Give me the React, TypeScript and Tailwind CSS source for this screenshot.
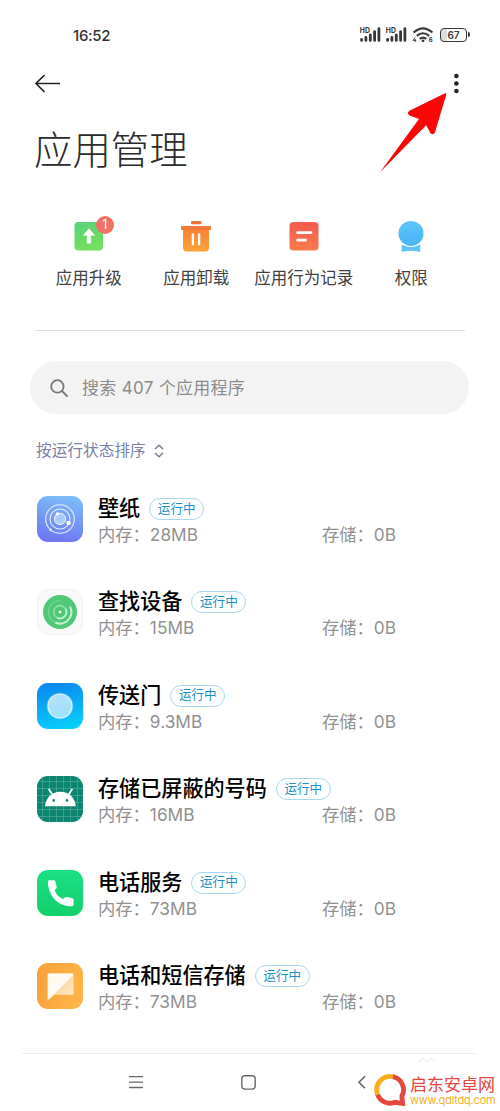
import * as React from "react"

interface AppItem {
  name: string
  memory: string
  storage: string
  icon: React.ReactNode
}

interface ActionItem {
  label: string
  icon: React.ReactNode
  badge?: number
}

const WallpaperIcon = () => (
  <svg viewBox="0 0 46 46" className="size-full">
    <defs>
      <linearGradient id="wallpaper" x1="0.6" y1="0" x2="0.4" y2="1">
        <stop offset="0" stopColor="#7cbcf8" />
        <stop offset="1" stopColor="#6d76f2" />
      </linearGradient>
    </defs>
    <rect width="46" height="46" rx="11" fill="url(#wallpaper)" />
    <g fill="none" stroke="#e3ecff" strokeWidth="1.1">
      <circle cx="23" cy="23" r="14.3" />
      <circle cx="23" cy="23" r="10" />
      <circle cx="23" cy="23" r="5.6" fill="#a9cdfb" />
    </g>
    <circle cx="31.5" cy="27" r="2.3" fill="#fff" />
    <circle cx="20.5" cy="18" r="1.8" fill="#fff" />
    <circle cx="13.5" cy="33.8" r="1.6" fill="#d3dcff" />
  </svg>
)

const FindDeviceIcon = () => (
  <svg viewBox="0 0 46 46" className="size-full">
    <rect x="0.5" y="0.5" width="45" height="45" rx="11" fill="#f9f9f9" stroke="#f1f1f1" />
    <circle cx="23" cy="23" r="17" fill="#50c878" />
    <g fill="none" stroke="#c4f2d3" strokeWidth="1.6" strokeLinecap="round">
      <circle cx="23" cy="23" r="6.4" stroke="#8fe0a8" />
      <path d="M23 11.5A11.5 11.5 0 1 0 23 34.5" stroke="#7ad898" strokeWidth="1.2" />
      <path d="M33.3 18.4A11.4 11.4 0 0 1 19 33.8" strokeWidth="2" />
      <path d="M28.7 20.1A6.4 6.4 0 0 1 20.6 29" />
    </g>
    <circle cx="23" cy="23" r="1.4" fill="#fff" />
  </svg>
)

const PortalIcon = () => (
  <svg viewBox="0 0 46 46" className="size-full">
    <defs>
      <linearGradient id="portal" x1="0.3" y1="0" x2="0.5" y2="1">
        <stop offset="0" stopColor="#0c87f0" />
        <stop offset="1" stopColor="#08cdfb" />
      </linearGradient>
      <linearGradient id="portal-orb" x1="0.3" y1="0" x2="0.7" y2="1">
        <stop offset="0" stopColor="#b5e0fb" />
        <stop offset="1" stopColor="#9be2fc" />
      </linearGradient>
    </defs>
    <rect width="46" height="46" rx="11" fill="url(#portal)" />
    <circle cx="23" cy="23" r="13.6" fill="#5cc5fb" opacity="0.45" />
    <circle cx="23" cy="23" r="11.9" fill="url(#portal-orb)" stroke="#d6f2ff" strokeWidth="1.4" />
  </svg>
)

const AndroidIcon = () => (
  <svg viewBox="0 0 46 46" className="size-full">
    <rect width="46" height="46" rx="11" fill="#0b8570" />
    <path
      d="M5.5 1V45M12.5 0V46M19.5 0V46M26.5 0V46M33.5 0V46M40.5 1V45M1 5.5H45M0 12.5H46M0 19.5H46M0 26.5H46M0 33.5H46M1 40.5H45"
      stroke="#58ac9e"
      strokeWidth="0.6"
    />
    <path d="M12 13.5L15.8 19M35 13.5L31.2 19" stroke="#fff" strokeWidth="1.7" strokeLinecap="round" />
    <path d="M8 30.3C8.6 21.8 15 15.7 23.4 15.7S38.2 21.8 38.8 30.3Z" fill="#fff" />
    <circle cx="16.7" cy="24.4" r="1.3" fill="#0b8570" />
    <circle cx="30" cy="24.4" r="1.3" fill="#0b8570" />
  </svg>
)

const PhoneIcon = () => (
  <svg viewBox="0 0 46 46" className="size-full">
    <defs>
      <linearGradient id="phone" x1="0" y1="0" x2="0" y2="1">
        <stop offset="0" stopColor="#1ce087" />
        <stop offset="1" stopColor="#12cf69" />
      </linearGradient>
    </defs>
    <rect width="46" height="46" rx="11" fill="url(#phone)" />
    <path
      d="M12.3 10.2H16.9Q18 10.2 18.3 11.3L19.7 16.7Q20 17.8 19.1 18.7L17.6 20.2C19 24 22 27.2 26 29L27.9 27.4Q28.8 26.7 29.9 27L35.6 28.3Q36.6 28.6 36.6 29.7V34.8Q36.6 36.2 35.2 36.3C22 37 11.2 26.4 10.9 12Q10.9 10.2 12.3 10.2Z"
      fill="#fff"
    />
  </svg>
)

const MessageIcon = () => (
  <svg viewBox="0 0 46 46" className="size-full">
    <defs>
      <linearGradient id="message" x1="0" y1="0" x2="1" y2="0.3">
        <stop offset="0" stopColor="#f9a039" />
        <stop offset="1" stopColor="#fcb348" />
      </linearGradient>
      <linearGradient id="message-fold" x1="0.2" y1="0.2" x2="0.9" y2="0.9">
        <stop offset="0.3" stopColor="#fcd59b" />
        <stop offset="1" stopColor="#feeacb" />
      </linearGradient>
    </defs>
    <rect width="46" height="46" rx="11" fill="url(#message)" />
    <path d="M12.3 10.4H35Q36.7 10.4 36.7 12.1V30.2Q36.7 31.8 35 31.8H17.2L12 36.3Q10.7 37.2 10.7 35.7V12.1Q10.7 10.4 12.3 10.4Z" fill="url(#message-fold)" />
    <path d="M12.3 10.4H35Q36.6 10.4 36.4 12L12 36.3Q10.7 37.2 10.7 35.7V12.1Q10.7 10.4 12.3 10.4Z" fill="#fffaf2" />
  </svg>
)

const UpgradeIcon = () => (
  <svg viewBox="0 0 32 32" className="size-8">
    <defs>
      <linearGradient id="upgrade" x1="0" y1="0" x2="0.3" y2="1">
        <stop offset="0" stopColor="#55d17c" />
        <stop offset="1" stopColor="#74df5e" />
      </linearGradient>
    </defs>
    <rect x="1.5" y="2" width="28.5" height="28.5" rx="4" fill="url(#upgrade)" />
    <path d="M16 8.8L21.6 15.2H17.8V23.2H14.2V15.2H10.4Z" fill="#fff" stroke="#fff" strokeWidth="0.6" strokeLinejoin="round" />
  </svg>
)

const UninstallIcon = () => (
  <svg viewBox="0 0 32 32" className="size-8">
    <defs>
      <linearGradient id="uninstall" x1="0" y1="0" x2="0" y2="1">
        <stop offset="0" stopColor="#f97f38" />
        <stop offset="1" stopColor="#fba337" />
      </linearGradient>
    </defs>
    <rect x="11" y="1" width="10.5" height="3.2" rx="1.2" fill="#ee7238" />
    <path d="M3 8H29V27.8Q29 31.5 25.3 31.5H6.7Q3 31.5 3 27.8Z" fill="url(#uninstall)" />
    <rect x="1" y="6" width="30" height="4" rx="1" fill="#f37a3b" />
    <path d="M12.9 13.5V25.3M19.1 13.5V25.3" stroke="#fff" strokeWidth="2.4" />
  </svg>
)

const RecordIcon = () => (
  <svg viewBox="0 0 32 32" className="size-8">
    <defs>
      <linearGradient id="record" x1="0" y1="0" x2="0" y2="1">
        <stop offset="0" stopColor="#f55a4e" />
        <stop offset="1" stopColor="#fb7a4c" />
      </linearGradient>
    </defs>
    <rect x="1.5" y="2" width="29" height="28.5" rx="4" fill="url(#record)" />
    <path d="M9.5 12.6H23M9.5 20.2H17.5" stroke="#fff" strokeWidth="2.8" strokeLinecap="round" />
  </svg>
)

const PermissionIcon = () => (
  <svg viewBox="0 0 32 32" className="size-8">
    <defs>
      <linearGradient id="permission" x1="0" y1="0" x2="0" y2="1">
        <stop offset="0" stopColor="#60c4fb" />
        <stop offset="1" stopColor="#45b5f7" />
      </linearGradient>
    </defs>
    <path d="M6.7 24.5Q16 29 25.3 24.5V31.2Q25.3 32 24.3 31.8Q16 29.8 7.7 31.8Q6.7 32 6.7 31.2Z" fill="#5fc2f7" />
    <circle cx="16" cy="13.4" r="13.4" fill="#fff" />
    <circle cx="16" cy="13.4" r="12.5" fill="url(#permission)" />
  </svg>
)

const actions: ActionItem[] = [
  { label: "应用升级", icon: <UpgradeIcon />, badge: 1 },
  { label: "应用卸载", icon: <UninstallIcon /> },
  { label: "应用行为记录", icon: <RecordIcon /> },
  { label: "权限", icon: <PermissionIcon /> },
]

const apps: AppItem[] = [
  { name: "壁纸", memory: "28MB", storage: "0B", icon: <WallpaperIcon /> },
  { name: "查找设备", memory: "15MB", storage: "0B", icon: <FindDeviceIcon /> },
  { name: "传送门", memory: "9.3MB", storage: "0B", icon: <PortalIcon /> },
  { name: "存储已屏蔽的号码", memory: "16MB", storage: "0B", icon: <AndroidIcon /> },
  { name: "电话服务", memory: "73MB", storage: "0B", icon: <PhoneIcon /> },
  { name: "电话和短信存储", memory: "73MB", storage: "0B", icon: <MessageIcon /> },
]

function Signal() {
  return (
    <svg viewBox="0 0 22 16" className="h-4 w-[22px] overflow-visible">
      <text x="0.8" y="5.8" fontSize="7.2" fontWeight="700" fill="#333" textLength="10" lengthAdjust="spacingAndGlyphs">
        HD
      </text>
      <path
        d="M2.6 13.4V12.4M6.9 13.4V10.4M11.3 13.4V7.8M15.6 13.4V4.6M19.9 13.4V1.6"
        stroke="#383838"
        strokeWidth="2.8"
        strokeLinecap="round"
      />
    </svg>
  )
}

function StatusBar() {
  return (
    <div className="flex h-[61px] shrink-0 items-center justify-between pt-2.5 pr-[30px] pb-0.5 pl-[73px]">
      <span className="pt-px text-[15px] leading-none font-medium tracking-[-0.3px] text-[#333]">16:52</span>
      <div className="flex items-center">
        <Signal />
        <div className="ml-1">
          <Signal />
        </div>
        <svg viewBox="0 0 22 16" className="ml-[5px] h-4 w-[22px] overflow-visible">
          <g fill="none" stroke="#383838" strokeWidth="2.1">
            <path d="M1.6 5.6Q11 -3 20.4 5.6" />
            <path d="M4.8 8.9Q11 3.6 17.2 8.9" />
            <path d="M7.7 11.9Q11 9.2 14.3 11.9" />
          </g>
          <circle cx="11" cy="13.8" r="1.4" fill="#383838" />
          <path d="M3.2 10.5L1 13.4H4.2M3.2 12V15" stroke="#383838" strokeWidth="0.9" fill="none" />
          <text x="16.8" y="15.3" fontSize="6" fontWeight="700" fill="#333">
            6
          </text>
        </svg>
        <div className="ml-[6px] flex h-[14px] w-[27px] items-center justify-center rounded-[4px] border-[1.5px] border-[#383838] bg-linear-to-r from-[#ddd] from-25% to-white to-25% text-[10px] leading-none font-semibold text-[#383838]">
          67
        </div>
        <div className="ml-px h-[5px] w-[2px] rounded-r bg-[#383838]" />
      </div>
    </div>
  )
}

function Header() {
  return (
    <header className="relative shrink-0 pr-[35px] pl-[34px]">
      <div className="flex h-[46px] items-center justify-between">
        <svg viewBox="0 0 27 20" className="h-5 w-[27px]" fill="none" stroke="#222" strokeWidth="1.7">
          <path d="M26 9.5H2M10.5 1L2 9.5L10.5 18" />
        </svg>
        <svg viewBox="0 0 18 24" className="h-6 w-[18px]" fill="#222">
          <circle cx="9.4" cy="4" r="2.3" />
          <circle cx="9.4" cy="11.5" r="2.3" />
          <circle cx="9.4" cy="19" r="2.3" />
        </svg>
      </div>
      <h1 className="mt-[15px] h-[58px] text-[38.4px] leading-[57px] font-light text-[#2b2b2b]">应用管理</h1>
      <svg viewBox="0 0 70 82" className="absolute top-[31px] left-[378px] h-[82px] w-[70px]">
        <path
          d="M66.6 1.5Q68.8 .8 68.2 3L56.9 40.6Q54.9 43.8 52.5 41.2L48.2 33.2L2 80.2L41 27L31.6 23.6Q28.2 21.2 31.4 18.8Z"
          fill="#f90606"
        />
      </svg>
    </header>
  )
}

function ActionGrid() {
  return (
    <div className="mx-[35px] mt-[40px] grid h-[111px] shrink-0 grid-cols-4 border-b border-[#dedede]">
      {actions.map((action) => (
        <div key={action.label} className="flex flex-col items-center">
          <div className="relative">
            {action.icon}
            {action.badge && (
              <span className="absolute -top-[4px] left-[23px] flex size-[18px] items-center justify-center rounded-full bg-[#f47065] text-[12.5px] leading-none text-white">
                {action.badge}
              </span>
            )}
          </div>
          <span className="mt-[14px] text-[16.5px] leading-6 whitespace-nowrap text-[#424242]">{action.label}</span>
        </div>
      ))}
    </div>
  )
}

function SearchBar() {
  return (
    <div className="mt-[30px] mr-[31px] ml-[30px] flex h-[53px] shrink-0 items-center rounded-full bg-[#f3f3f3] pl-5">
      <svg viewBox="0 0 18 18" className="size-[18px]" fill="none" stroke="#767676" strokeWidth="1.8">
        <circle cx="7.4" cy="7.4" r="6.2" />
        <path d="M12 12L17 17" strokeLinecap="round" />
      </svg>
      <span className="mt-0.5 ml-[14px] text-[17px] tracking-[0.3px] text-[#8b8b8b]">搜索 407 个应用程序</span>
    </div>
  )
}

function AppRow({ app }: { app: AppItem }) {
  return (
    <li className="flex h-[93.4px] items-start">
      <div className="size-[46px] shrink-0">{app.icon}</div>
      <div className="ml-[15px] flex-1">
        <div className="flex h-[26px] items-center">
          <span className="text-[21.1px] leading-[26px] font-medium text-black">{app.name}</span>
          <span className="ml-[9px] flex h-[22px] w-[55px] items-center justify-center rounded-full border border-[#a9d8ee] text-[12.6px] leading-none text-[#1a8fc8]">
            运行中
          </span>
        </div>
        <div className="flex h-[26px] items-center text-[17.3px] text-[#919191]">
          <span className="w-[224px]">内存：{app.memory}</span>
          <span>存储：{app.storage}</span>
        </div>
      </div>
    </li>
  )
}

function BottomNav() {
  return (
    <nav className="mx-[22px] flex h-[58px] shrink-0 items-center border-t border-[#ededed] text-[#666]">
      <svg viewBox="0 0 16 16" className="ml-[106px] size-4" stroke="currentColor" strokeWidth="1.3">
        <path d="M1 1.7H15M1 7.1H15M1 12.5H15" />
      </svg>
      <svg viewBox="0 0 16 16" className="ml-[97px] size-4" fill="none" stroke="currentColor" strokeWidth="1.4">
        <rect x="0.8" y="0.7" width="13.4" height="13.4" rx="3" />
      </svg>
      <svg viewBox="0 0 10 16" className="ml-[100px] h-4 w-2.5" fill="none" stroke="currentColor" strokeWidth="1.6">
        <path d="M8 1.3L2 7.3L8 13.3" />
      </svg>
    </nav>
  )
}

function SiteMark() {
  return (
    <div className="absolute right-[4px] bottom-0 flex items-center">
      <svg viewBox="0 0 34 34" className="mb-1 h-[34px] w-[34px]" fill="none" strokeWidth="4.8">
        <path d="M19.8 3.7A13.4 13.4 0 0 0 4.6 21.6" stroke="#fbad18" />
        <path d="M4.6 21.6A13.4 13.4 0 0 0 22 29.3L29.6 30.5L28.9 23.2A13.4 13.4 0 0 0 19.8 3.7" stroke="#e4483c" />
      </svg>
      <div className="ml-[3px] flex w-[86px] flex-col">
        <span className="text-[17px] leading-[17px] whitespace-nowrap text-[#e5473f]">启东安卓网</span>
        <span className="text-[11px] leading-[13px] tracking-[-0.2px] whitespace-nowrap text-[#f5b022]">www.qdltdq.com</span>
      </div>
    </div>
  )
}

export default function App() {
  return (
    <div className="relative flex h-[1111px] w-[500px] flex-col overflow-hidden bg-white font-[Inter,'Noto_Sans_CJK_SC',sans-serif]">
      <StatusBar />
      <Header />
      <ActionGrid />
      <SearchBar />
      <div className="mt-[25px] ml-9 flex h-6 shrink-0 items-center text-[15.7px] text-[#7b80a6]">
        按运行状态排序
        <svg viewBox="0 0 10 14" className="ml-2 h-3.5 w-2.5" fill="none" stroke="#777b8e" strokeWidth="1.4">
          <path d="M1 5L5 1.2L9 5M1 9L5 12.8L9 9" />
        </svg>
      </div>
      <ul className="mt-[33px] ml-[37px] min-h-0 flex-1">
        {apps.map((app) => (
          <AppRow key={app.name} app={app} />
        ))}
      </ul>
      <svg viewBox="0 0 18 6" className="absolute top-[1057px] left-[418px] h-1.5 w-[18px]" fill="none" stroke="#e4e4e4">
        <path d="M1 5Q5 -2 8.5 5M9.5 5Q13 -2 17 5" />
      </svg>
      <BottomNav />
      <SiteMark />
    </div>
  )
}
